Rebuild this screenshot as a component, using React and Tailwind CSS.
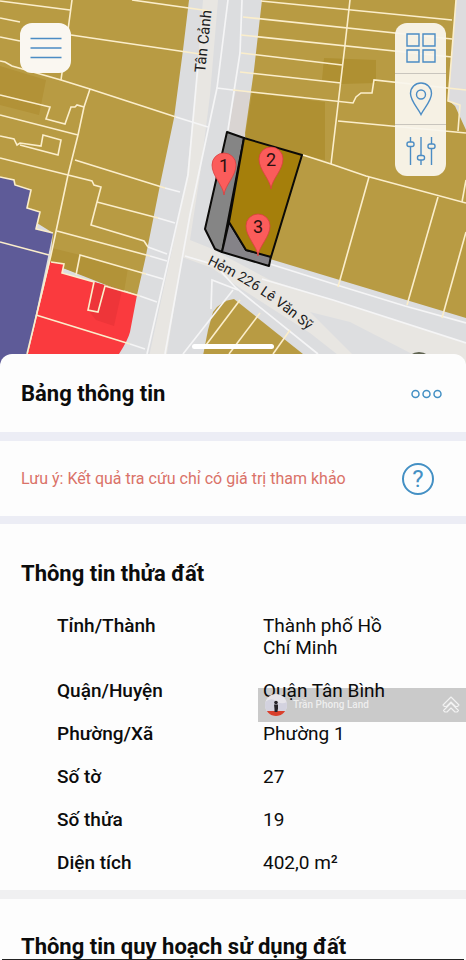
const PARCEL_LINES = [
  // west block
  '0,1 70,10', '72,0 68,30 61,80', '0,18 20,22', '71,35 200,54', '0,37 20,41', '132,0 210,11',
  '0,61 5,62 12,66 61,80 90,89 176,117',
  '90,89 84,107 78,135 68,175 51,255 27,354',
  '0,95 50,107 46,119 65,124 71,107 75,107 77,105 84,107',
  '0,115 78,135',
  '0,136 14,139 17,145 20,143 41,146 43,135 61,140 58,155 20,145',
  '0,158 68,175 92,181 94,185 101,187 97,202 91,225 144,241 148,247',
  '75,160 165,188', '97,202 158,218', '57,231 150,256',
  '76,275 80,255 146,274', '51,262 64,264 62,273 94,282 88,310 98,312 105,286 140,296',
  '0,242 49,255', '36,315 130,344',
  '0,177 14,180 15,185 31,190 27,208 40,212 36,229 53,233',
  // east block
  '261,1 452,20', '243,17 452,39', '241,35 452,57', '241,53 342,65', '240,72 341,83',
  '233,90 353,103 356,97 361,93 372,93 374,80 466,90',
  '338,121 466,133', '350,0 345,45 331,164', '456,0 448,101 460,105 458,131',
  '303,155 331,164 366,176 466,203', '369,177 338,287', '438,197 407,305', '466,232 442,318', '466,180 462,202',
  // south block
  '203,349 240,300', '229,354 260,313', '273,354 290,330',
];

const ROAD_LINES = [
  '228,0 217,88 208,130 190,215 165,354', '198,65 188,175 147,354', '242,0 240,53 228,130', '217,88 233,90',
  '176,117 208,127', '165,188 180,192', '158,218 175,223', '148,247 167,254', '150,256 167,261', '146,274 163,279',
  '140,296 157,302', '130,344 145,349',
  '185,256 215,265 236,288 318,354', '270,264 340,286 405,306 466,323', '262,279 333,300 466,343',
  '183,354 233,290', '211,309 212,280 238,290',
];

const PINS = [
  { label: '1', x: 224, y: 165 },
  { label: '2', x: 271, y: 159 },
  { label: '3', x: 258, y: 226 },
];

const LAND_ROWS = [
  { label: 'Tỉnh/Thành', value: 'Thành phố Hồ Chí Minh' },
  { label: 'Quận/Huyện', value: 'Quận Tân Bình' },
  { label: 'Phường/Xã', value: 'Phường 1' },
  { label: 'Số tờ', value: '27' },
  { label: 'Số thửa', value: '19' },
  { label: 'Diện tích', value: '402,0 m²' },
];

function ParcelMap() {
  return (
    <svg viewBox="0 0 466 366" preserveAspectRatio="xMidYMin slice" className="block w-full aspect-[466/366]" role="img" aria-label="Tân Cảnh, Hẻm 226 Lê Văn Sỹ">
      <rect width="466" height="366" fill="#dcdddf" />

      {/* carriageways */}
      <path d="M203 0H218L210 95L200 175L190 240L210 248L270 280L333 300L466 343V366H352L310 333L240 288L212 268L182 257L165 366H147L186 185L195 95Z" fill="#e8e6e2" />
      <path d="M310 312L350 322L420 358H356Z" fill="#dddee0" />
      <path d="M228 130L236 90L250 93L245 137Z" fill="#d9d4d2" />

      {/* zones */}
      <path d="M0 0H189L183 50L174 118L161 180L145 260L137 295L50 263L53 233L0 200Z" fill="#b89b43" />
      <path d="M0 66L46 80L39 115L0 105Z" fill="#b29237" />
      <path d="M52 248L80 255L128 268L124 292L50 263Z" fill="#b29338" />
      <path d="M0 177L14 180L15 185L31 190L27 208L40 212L36 229L53 233L25 366H0Z" fill="#5e5b98" />
      <path d="M50 262L64 264L62 273L94 282L137 295L130 332Q128 340 119 354L112 366H25Z" fill="#fa3a3e" />
      <path d="M94 282L122 290L114 326L96 320L88 310Z" fill="#ee3539" />
      <path d="M262 0H466V318L270 259L245 133L254 70Z" fill="#b89b43" />
      <path d="M252 93L325 102V160L303 155L245 137Z" fill="#af9032" />
      <path d="M324 58L376 60V83L340 84L322 80Z" fill="#af9032" />
      <path d="M456 0H466V130L455 106L448 100Z" fill="#dddcde" />
      <path d="M201 366L208 330L213 312Q220 301 234 299L318 366Z" fill="#b89b43" />
      <path d="M410 355Q419 349 428 355V366H410Z" fill="#5f6350" />

      <g fill="none" stroke="#f5f5f6" strokeWidth="1.7">
        {ROAD_LINES.map(points => <polyline key={points} points={points} />)}
      </g>
      <g fill="none" stroke="#fbeecb" strokeWidth="1.6">
        {PARCEL_LINES.map(points => <polyline key={points} points={points} />)}
      </g>

      {/* selected parcel */}
      <g stroke="#0b0a08" strokeWidth="2" strokeLinejoin="round">
        <path d="M227 132L244 138L222 252L215 249L205 229Z" fill="#858585" />
        <path d="M229 222L246 250L271 256L269 266L222 252Z" fill="#858388" />
        <path d="M244 138L302 155L271 257L246 250L229 222Z" fill="#a57f0b" />
      </g>

      <g fontFamily="Roboto, sans-serif" fill="#1c1c1c">
        <text fontSize="15" transform="translate(205 73) rotate(-84)">Tân Cảnh</text>
        <path id="alley" d="M207 264Q258 287 312 334" fill="none" />
        <text fontSize="14">
          <textPath href="#alley">Hẻm 226 Lê Văn Sỹ</textPath>
        </text>
      </g>

      {PINS.map(({ label, x, y }) => (
        <g key={label} transform={`translate(${x} ${y})`}>
          <path d="M0 30C-1 20-12 11-12 0A12 12 0 0 1 12 0C12 11 1 20 0 30Z" fill="#fb5c5b" stroke="#d9403f" strokeWidth="0.8" />
          <text y="7" textAnchor="middle" fontFamily="Roboto, sans-serif" fontSize="18" fill="#2a1010">{label}</text>
        </g>
      ))}
    </svg>
  );
}

function GridIcon() {
  return (
    <svg width="32" height="32" viewBox="0 0 32 32" fill="none" stroke="#4b8cc4" strokeWidth="1.4">
      <path d="M2 2h12v12H2zM18 2h12v12H18zM2 18h12v12H2zM18 18h12v12H18z" />
    </svg>
  );
}

function PlaceIcon() {
  return (
    <svg width="32" height="34" viewBox="0 0 32 34" fill="none" stroke="#4b8cc4" strokeWidth="1.4">
      <path d="M16 32.500C13 26 5.500 19 5.500 11.500A10.500 10.500 0 0 1 26.500 11.500C26.500 19 19 26 16 32.500Z" />
      <circle cx="16" cy="12.500" r="4.500" />
    </svg>
  );
}

function SlidersIcon() {
  return (
    <svg width="32" height="32" viewBox="0 0 32 32" fill="none" stroke="#4b8cc4" strokeWidth="1.4">
      <path d="M5.500 2v5M5.500 11.500v18.500M16 2v18.500M16 25v5M26.500 2v7M26.500 13.500v16.500" />
      <rect x="2" y="7" width="7" height="4.500" rx="2" />
      <rect x="12.500" y="20.500" width="7" height="4.500" rx="2" />
      <rect x="23" y="9" width="7" height="4.500" rx="2" />
    </svg>
  );
}

const TOOLS = [
  { name: 'Lớp bản đồ', Icon: GridIcon },
  { name: 'Vị trí', Icon: PlaceIcon },
  { name: 'Bộ lọc', Icon: SlidersIcon },
];

function AgentBadge() {
  return (
    <div className="w-[208px] h-[34px] pl-[7px] pr-1.5 bg-black/20 flex items-center gap-1.5">
      <svg width="22" height="22" viewBox="0 0 22 22" className="shrink-0">
        <clipPath id="avatar"><circle cx="11" cy="11" r="11" /></clipPath>
        <g clipPath="url(#avatar)">
          <rect width="22" height="22" fill="#e6e4ea" />
          <path d="M0 8Q6 3 11 7T22 8V17H0Z" fill="#d3d2df" />
          <rect y="17" width="22" height="5" fill="#d8402c" />
          <circle cx="11" cy="8.500" r="1.800" fill="#262329" />
          <path d="M9 10.500h4v4l-.6 3.500h-2.800L9.400 14z" fill="#262329" />
        </g>
      </svg>
      <span className="flex-1 text-[10px] leading-3 font-medium text-white/70">Trần Phong Land</span>
      <svg width="18" height="18" viewBox="0 0 18 18" fill="none" stroke="#f2f2f2" strokeWidth="1.1" strokeLinejoin="round">
        <path d="M9 1L17 9L15.500 10.500H13.500L9 6L4.500 10.500H2.500L1 9Z" />
        <path d="M9 7L16.500 14.500L15 16H13L9 12L5 16H3L1.500 14.500Z" />
      </svg>
    </div>
  );
}

export default function App() {
  return (
    <div className="relative h-screen overflow-hidden flex flex-col bg-[#fdfdfd] text-[#0c0c0c] font-[Roboto,sans-serif]">
      <header className="relative shrink-0">
        <ParcelMap />
        <button type="button" aria-label="Menu" className="absolute left-5 top-[23px] w-[51px] h-[50px] rounded-xl bg-[#faf7f1] flex items-center justify-center">
          <svg width="32" height="22" viewBox="0 0 32 22" stroke="#4b8cc4" strokeWidth="1.6">
            <path d="M0.500 1.500H31.500M0.500 11H31.500M0.500 20.500H31.500" />
          </svg>
        </button>
        <div className="absolute right-5 top-[23px] w-[51px] rounded-xl bg-[#f9f5ed]/95 divide-y divide-[#c9c5bd]">
          {TOOLS.map(({ name, Icon }) => (
            <button key={name} type="button" aria-label={name} className="w-full h-[51px] flex items-center justify-center">
              <Icon />
            </button>
          ))}
        </div>
        <div className="absolute left-1/2 bottom-[17px] -translate-x-1/2 w-[82px] h-[5px] rounded-full bg-white" />
      </header>

      <main className="relative flex-1 min-h-0 overflow-hidden -mt-3 rounded-t-xl bg-[#fdfdfd]">
        <div className="h-[78px] pt-0.5 pl-[21px] pr-6 flex items-center justify-between">
          <h1 className="text-[22px] leading-7 font-bold">Bảng thông tin</h1>
          <button type="button" aria-label="Thêm">
            <svg width="31" height="10" viewBox="0 0 31 10" fill="none" stroke="#4490c4" strokeWidth="1.5" className="block">
              <circle cx="4.500" cy="5" r="3.500" />
              <circle cx="15.500" cy="5" r="3.500" />
              <circle cx="26.500" cy="5" r="3.500" />
            </svg>
          </button>
        </div>

        <div className="h-[84px] pl-[21px] pr-8 border-t-9 border-[#ecedf5] flex items-center justify-between">
          <p className="text-base text-[#da7268]">Lưu ý: Kết quả tra cứu chỉ có giá trị tham khảo</p>
          <button type="button" aria-label="Trợ giúp" className="size-8 rounded-full border-2 border-[#4490c4] text-2xl text-[#4490c4] flex items-center justify-center">?</button>
        </div>

        <section className="border-t-8 border-[#ecedf5] px-[21px] pt-9 pb-4">
          <h2 className="text-[22px] leading-7 font-bold">Thông tin thửa đất</h2>
          <div className="relative mt-1.5 pl-9 pr-10">
            <table className="w-full table-fixed text-left text-[19px] leading-[22px]">
              <tbody>
                {LAND_ROWS.map(({ label, value }) => (
                  <tr key={label} className="align-top">
                    <th scope="row" className="w-[206px] pt-[21px] font-medium">{label}</th>
                    <td className="pt-[21px]">{value}</td>
                  </tr>
                ))}
              </tbody>
            </table>
            <div className="absolute -right-[21px] top-[94px]">
              <AgentBadge />
            </div>
          </div>
        </section>

        <section className="border-t-9 border-[#f0f0f1] px-[21px] pt-[34px]">
          <h2 className="text-[22px] leading-7 font-bold">Thông tin quy hoạch sử dụng đất</h2>
        </section>
      </main>
      <div className="absolute bottom-0 inset-x-0.5 h-px bg-[#222]" />
    </div>
  );
}
